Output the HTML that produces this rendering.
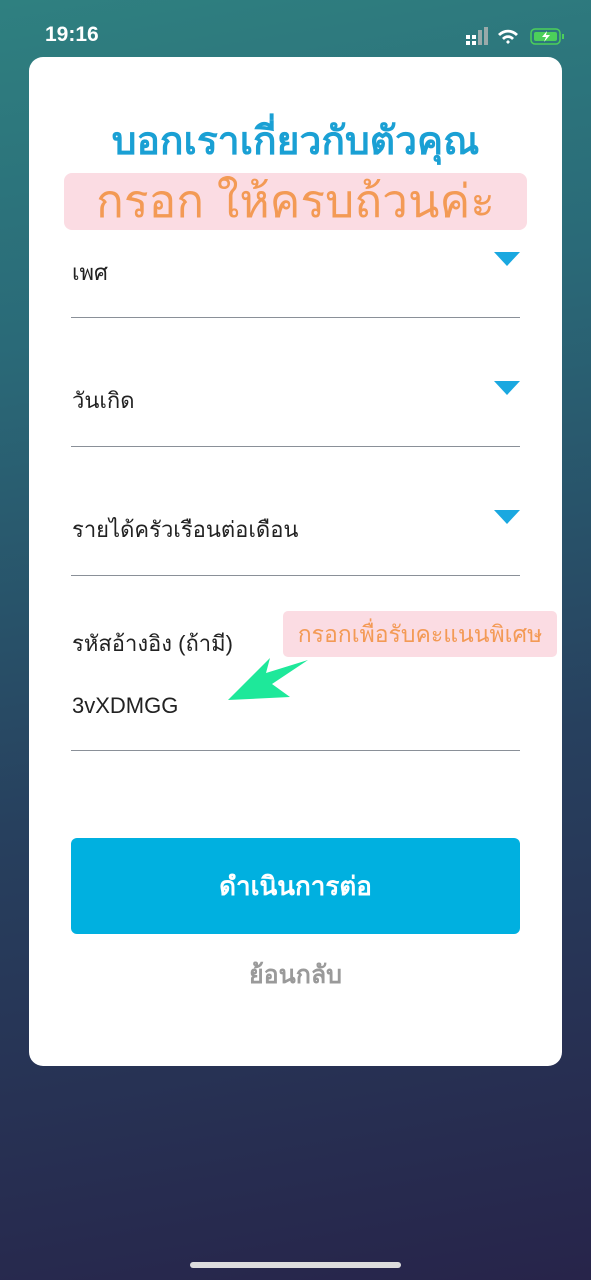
<!DOCTYPE html>
<html><head><meta charset="utf-8"><style>
*{margin:0;padding:0;box-sizing:border-box}
body{width:591px;height:1280px;overflow:hidden;position:relative;font-family:"Liberation Sans","DejaVu Sans",sans-serif;background:linear-gradient(170deg,#2f8080 0%,#2a6a78 25%,#27405e 60%,#27244a 100%)}
.st{position:absolute;top:23px;left:45px;color:#fff;font-size:21px;font-weight:bold}
.card{position:absolute;left:29px;top:57px;width:533px;height:1009px;background:#fff;border-radius:14px}
.a{position:absolute}
.h1{top:110px;left:0;width:591px;text-align:center;color:#1aa0d4;font-size:39px;font-weight:bold}
.pk{background:#fbdce3;border-radius:8px;color:#f39a55}
.lbl{position:absolute;left:72px;font-size:22px;color:#222}
.ln{position:absolute;left:71px;width:449px;height:1px;background:#8a9098}
.tri{position:absolute;left:494px;width:0;height:0;border-left:13px solid transparent;border-right:13px solid transparent;border-top:14px solid #1aa8e0}
.btn{position:absolute;left:71px;top:838px;width:449px;height:96px;background:#00b0e0;border-radius:6px;color:#fff;font-size:26px;font-weight:bold;text-align:center;line-height:96px}
</style></head><body>
<div class="st">19:16</div>
<svg class="a" style="left:464px;top:26px" width="104" height="20">
<g fill="#fff"><rect x="2" y="9" width="4" height="4"/><rect x="2" y="15" width="4" height="4"/><rect x="8" y="9" width="4" height="4"/><rect x="8" y="15" width="4" height="4"/></g>
<rect x="14" y="4" width="4" height="15" fill="#9aa"/><rect x="20" y="1" width="4" height="18" fill="#9aa"/>
<path d="M34 8a14 14 0 0 1 20 0l-2 2a11 11 0 0 0-16 0zM38 12a8 8 0 0 1 12 0l-2 2a5 5 0 0 0-8 0zM42 16l2-2 2 2-2 2z" fill="#fff"/>
<rect x="67" y="3" width="29" height="15" rx="4" fill="none" stroke="#4ccf5a" stroke-width="1.5"/><rect x="70" y="6" width="23" height="9" rx="2" fill="#4ccf5a"/><rect x="98" y="8" width="2" height="5" fill="#4ccf5a"/>
<path d="M83 5l-5 6h4l-2 5 6-7h-4z" fill="#fff"/></svg>
<div class="card"></div>
<div class="a h1">บอกเราเกี่ยวกับตัวคุณ</div>
<div class="a pk" style="left:64px;top:173px;width:463px;height:57px;font-size:46px;text-align:center;line-height:57px;overflow:hidden">กรอก ให้ครบถ้วนค่ะ</div>
<div class="lbl" style="top:255px">เพศ</div><div class="tri" style="top:252px"></div><div class="ln" style="top:317px"></div>
<div class="lbl" style="top:383px">วันเกิด</div><div class="tri" style="top:381px"></div><div class="ln" style="top:446px"></div>
<div class="lbl" style="top:512px">รายได้ครัวเรือนต่อเดือน</div><div class="tri" style="top:510px"></div><div class="ln" style="top:575px"></div>
<div class="lbl" style="top:626px">รหัสอ้างอิง (ถ้ามี)</div>
<div class="a pk" style="left:283px;top:611px;width:274px;height:46px;font-size:23px;line-height:46px;text-align:center;border-radius:5px">กรอกเพื่อรับคะแนนพิเศษ</div>
<svg class="a" style="left:0;top:0" width="591" height="800"><polygon points="228,700 290,697 272,684 308,660 266,673 270,658" fill="#1ee89a"/></svg>
<div class="lbl" style="top:693px">3vXDMGG</div><div class="ln" style="top:750px"></div>
<div class="btn">ดำเนินการต่อ</div>
<div class="a" style="left:0;width:591px;top:955px;text-align:center;font-size:25px;font-weight:bold;color:#9a9a9a">ย้อนกลับ</div>
<div class="a" style="left:190px;top:1262px;width:211px;height:6px;border-radius:3px;background:#ddd"></div>
</body></html>
